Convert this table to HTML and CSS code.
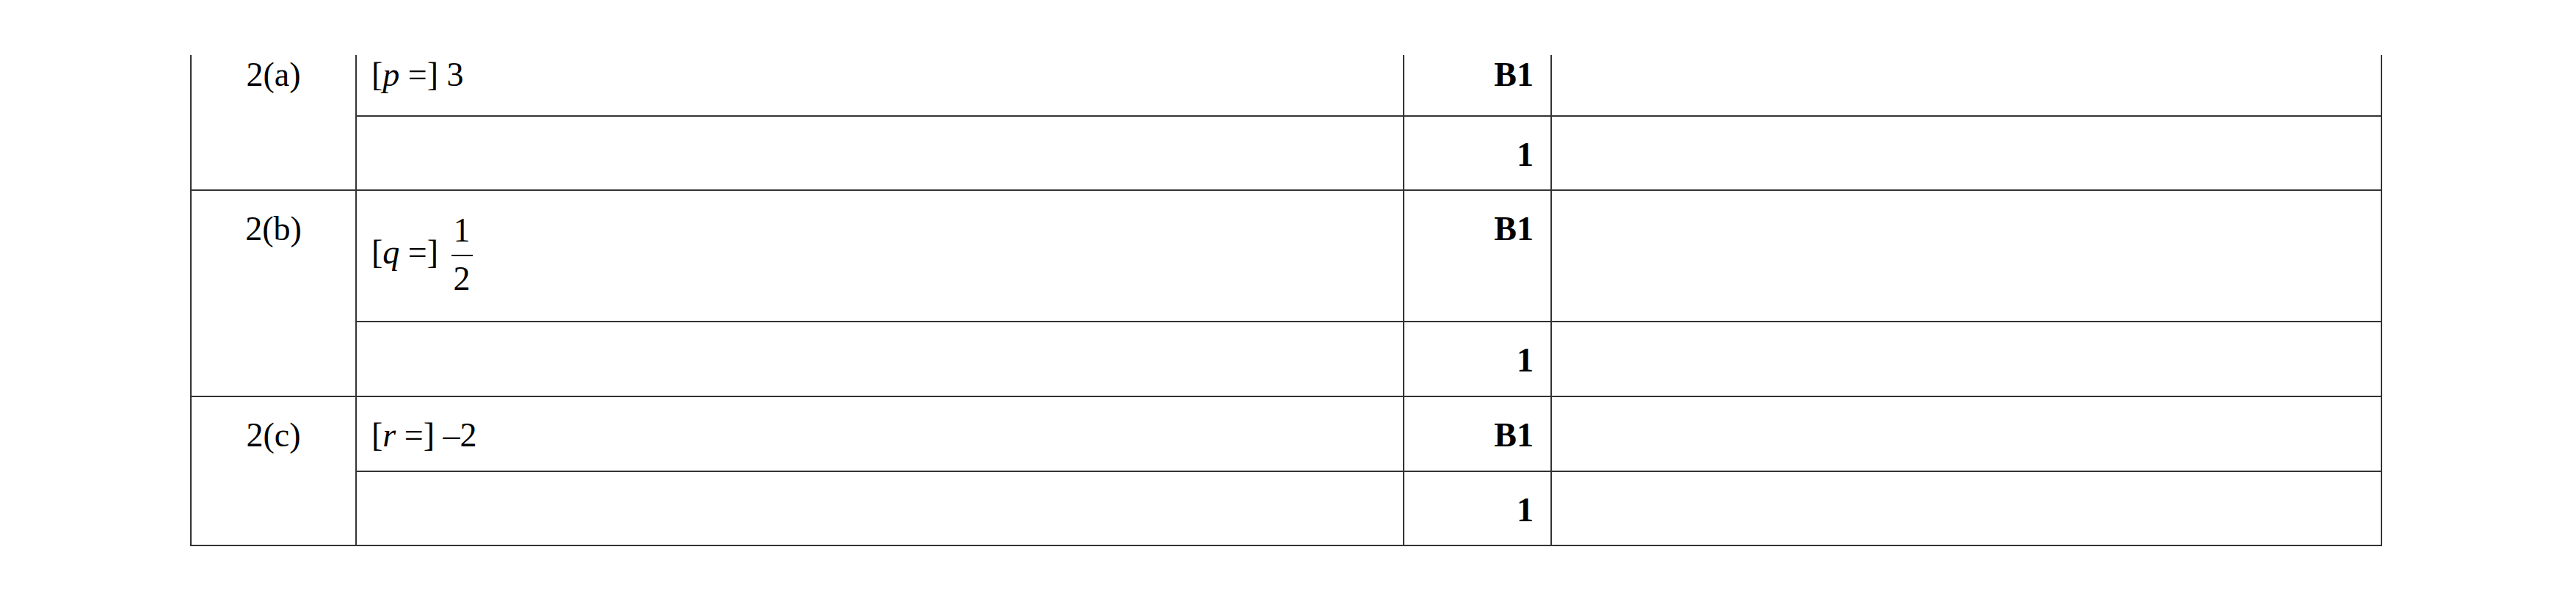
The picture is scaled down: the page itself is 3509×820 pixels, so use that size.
FILE: index.html
```html
<!DOCTYPE html>
<html lang="en">
<head>
<meta charset="utf-8">
<title>Mark scheme</title>
<link rel="stylesheet" href="styles.css">
</head>
<body>
<div class="page">
  <div class="clip">
    <div class="marks">
      <div class="cell q">2(a)</div>
      <div class="cell ans">[<i class="var">p</i> =] 3</div>
      <div class="cell mk">B1</div>
      <div class="cell gd"></div>
      <div class="cell ans"></div>
      <div class="cell mk">1</div>
      <div class="cell gd"></div>

      <div class="cell q">2(b)</div>
      <div class="cell ans has-frac">[<i class="var">q</i> =] <span class="frac"><span class="num">1</span><span class="den">2</span></span></div>
      <div class="cell mk">B1</div>
      <div class="cell gd"></div>
      <div class="cell ans"></div>
      <div class="cell mk">1</div>
      <div class="cell gd"></div>

      <div class="cell q">2(c)</div>
      <div class="cell ans">[<i class="var">r</i> =] –2</div>
      <div class="cell mk">B1</div>
      <div class="cell gd"></div>
      <div class="cell ans"></div>
      <div class="cell mk">1</div>
      <div class="cell gd"></div>
    </div>
  </div>
</div>
</body>
</html>
```
FILE: styles.css
```css
html, body {
  margin: 0;
  padding: 0;
  background: #ffffff;
}

body {
  font-family: "Liberation Serif", "Times New Roman", serif;
  color: #000000;
}

.page {
  padding-top: 75px;
  padding-left: 259px;
  height: 745px;
}

.clip {
  overflow: hidden;
  width: max-content;
}

.marks {
  display: grid;
  grid-template-columns: 225px 1427px 201px 1131px;
  grid-template-rows: 109px 101px 179px 102px 102px 101px;
  border-left: 2px solid #333333;
  margin-top: -25px;
  width: max-content;
}

.cell {
  box-sizing: border-box;
  border-right: 2px solid #333333;
  border-bottom: 2px solid #333333;
  padding-top: 24px;
  font-size: 46px;
  line-height: 1.2;
  white-space: nowrap;
}

.q {
  grid-row: span 2;
  text-align: center;
}

.ans {
  padding-left: 20px;
}

.has-frac {
  padding-top: 31px;
}

.mk {
  text-align: right;
  padding-right: 23px;
  font-weight: bold;
}

.var {
  font-style: italic;
}

.frac {
  display: inline-block;
  vertical-align: -36px;
  margin-left: 6px;
  text-align: center;
}

.num,
.den {
  display: block;
  line-height: 46px;
  padding-left: 3px;
  padding-right: 3px;
}

.num {
  padding-bottom: 10px;
  border-bottom: 2px solid #000000;
}

.den {
  padding-top: 8px;
}
```
